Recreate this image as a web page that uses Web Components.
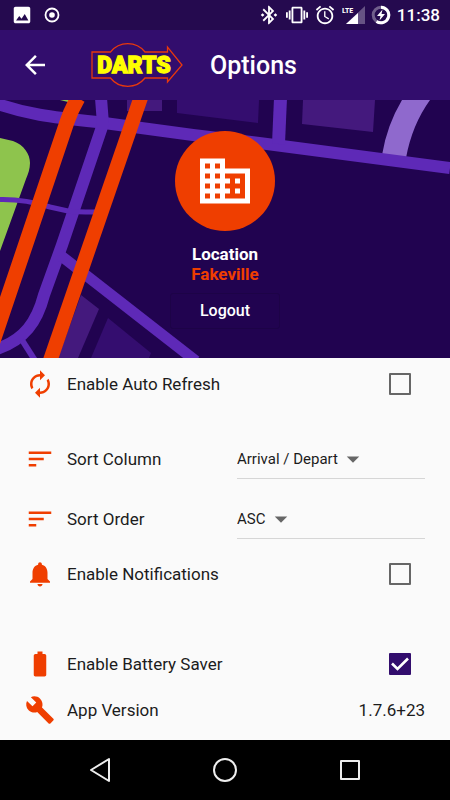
<!DOCTYPE html>
<html lang="en">
<head>
<meta charset="UTF-8">
<meta name="viewport" content="width=device-width, initial-scale=1">
<title>DARTS - Options</title>
<style>
  body {
    margin: 0;
    min-height: 100vh;
    display: flex;
    flex-direction: column;
    background: #fafafa;
    font-family: Roboto, "Liberation Sans", sans-serif;
    --primary: #320d6d;
    --primary-dark: #250a4f;
    --accent: #ef3e00;
  }
  main {
    flex: 1;
    padding: 1px 25px 0;
  }
  .spaced { margin-bottom: 20px; }
  .spaced-lg { margin-bottom: 40px; }
</style>
</head>
<body>
  <status-bar time="11:38"></status-bar>
  <app-header>Options</app-header>
  <location-hero>
    <span slot="title">Location</span>
    <span slot="name">Fakeville</span>
  </location-hero>
  <main>
    <option-toggle class="spaced" icon="autorenew" label="Enable Auto Refresh"></option-toggle>
    <option-select icon="sort" label="Sort Column" value="Arrival / Depart"></option-select>
    <option-select icon="sort" label="Sort Order" value="ASC"></option-select>
    <option-toggle class="spaced-lg" icon="bell" label="Enable Notifications"></option-toggle>
    <option-toggle icon="battery" label="Enable Battery Saver" checked></option-toggle>
    <option-info icon="build" label="App Version">1.7.6+23</option-info>
  </main>
  <nav-bar></nav-bar>

<script>
const ICONS = {
  back: 'M20 11H7.83l5.59-5.59L12 4l-8 8 8 8 1.41-1.41L7.83 13H20v-2z',
  business: 'M12 7V3H2v18h20V7H12zM6 19H4v-2h2v2zm0-4H4v-2h2v2zm0-4H4V9h2v2zm0-4H4V5h2v2zm4 12H8v-2h2v2zm0-4H8v-2h2v2zm0-4H8V9h2v2zm0-4H8V5h2v2zm10 12h-8v-2h2v-2h-2v-2h2v-2h-2V9h8v10zm-2-8h-2v2h2v-2zm0 4h-2v2h2v-2z',
  autorenew: 'M12 6v3l4-4-4-4v3c-4.42 0-8 3.58-8 8 0 1.57.46 3.03 1.24 4.26L6.7 14.8c-.45-.83-.7-1.79-.7-2.8 0-3.31 2.69-6 6-6zm6.76 1.74L17.3 9.2c.44.84.7 1.79.7 2.8 0 3.31-2.69 6-6 6v-3l-4 4 4 4v-3c4.42 0 8-3.58 8-8 0-1.57-.46-3.03-1.24-4.26z',
  sort: 'M3 18h6v-2H3v2zM3 6v2h18V6H3zm0 7h12v-2H3v2z',
  bell: 'M12 22c1.1 0 2-.9 2-2h-4c0 1.1.89 2 2 2zm6-6v-5c0-3.07-1.64-5.64-4.5-6.32V4c0-.83-.67-1.5-1.5-1.5s-1.5.67-1.5 1.5v.68C7.63 5.36 6 7.92 6 11v5l-2 2v1h16v-1l-2-2z',
  battery: 'M15.67 4H14V2h-4v2H8.33C7.6 4 7 4.6 7 5.33v15.33C7 21.4 7.6 22 8.33 22h7.33c.74 0 1.34-.6 1.34-1.33V5.33C17 4.6 16.4 4 15.67 4z',
  build: 'M22.7 19l-9.1-9.1c.9-2.3.4-5-1.5-6.9-2-2-5-2.4-7.4-1.3L9 6 6 9 1.6 4.7C.4 7.1.9 10.1 2.9 12.1c1.9 1.9 4.6 2.4 6.9 1.5l9.1 9.1c.4.4 1 .4 1.4 0l2.3-2.3c.5-.4.5-1.1.1-1.4z',
  dropdown: 'M7 10l5 5 5-5z',
  image: 'M21 19V5c0-1.1-.9-2-2-2H5c-1.1 0-2 .9-2 2v14c0 1.1.9 2 2 2h14c1.1 0 2-.9 2-2zM5.500 18l3.500-5 2.500 3 3.500-5 4 7z',
  bluetooth: 'M7 12l-2-2-2 2 2 2 2-2zM17.710 7.710L12 2h-1v7.590L6.410 5 5 6.410 10.590 12 5 17.590 6.410 19 11 14.410V22h1l5.710-5.710-4.300-4.290 4.300-4.290zM13 5.830l1.880 1.880L13 9.590V5.830zm1.880 10.460L13 18.170v-3.760l1.880 1.880zM19 10l-2 2 2 2 2-2-2-2z',
  vibration: 'M0 15h2V9H0v6zm3 2h2V7H3v10zm19-8v6h2V9h-2zm-3 8h2V7h-2v10zM16.500 3h-9C6.670 3 6 3.670 6 4.500v15c0 .83.67 1.500 1.500 1.500h9c.83 0 1.500-.67 1.500-1.500v-15c0-.83-.67-1.500-1.500-1.500zM16 19H8V5h8v14z',
  alarm: 'M22 5.720l-4.600-3.860-1.290 1.530 4.600 3.860L22 5.720zM7.880 3.390L6.600 1.860 2 5.710l1.290 1.530 4.590-3.850zM12.500 8H11v6l4.750 2.850.75-1.230-4-2.370V8zM12 4c-4.970 0-9 4.030-9 9s4.020 9 9 9c4.970 0 9-4.030 9-9s-4.030-9-9-9zm0 16c-3.870 0-7-3.130-7-7s3.130-7 7-7 7 3.130 7 7-3.130 7-7 7z'
};

class AppIcon extends HTMLElement {
  constructor() {
    super();
    this.attachShadow({ mode: 'open' });
  }

  connectedCallback() {
    this.shadowRoot.innerHTML = `
      <style>
        :host { display: block; flex: none; width: 30px; height: 30px; }
        svg { display: block; width: 100%; height: 100%; fill: currentColor; }
      </style>
      <svg viewBox="0 0 24 24" aria-hidden="true"><path fill-rule="evenodd" d="${ICONS[this.getAttribute('name')]}"/></svg>
    `;
  }
}

class StatusBar extends HTMLElement {
  constructor() {
    super();
    this.attachShadow({ mode: 'open' });
  }

  connectedCallback() {
    this.shadowRoot.innerHTML = `
      <style>
        :host {
          display: flex;
          align-items: center;
          height: 30px;
          padding: 0 10px 0 11px;
          background: var(--primary-dark);
          color: #fff;
        }
        .left, .right { display: flex; align-items: center; }
        .left { gap: 11px; }
        .right { margin-left: auto; gap: 6px; }
        svg { display: block; flex: none; }
        app-icon { width: 22px; height: 22px; }
        .lte { font: 700 8px "Liberation Sans Narrow", "Roboto Condensed", Roboto, sans-serif; }
        time { font-size: 17px; font-weight: 500; line-height: 30px; }
      </style>
      <div class="left">
        <app-icon name="image"></app-icon>
        <svg width="16" height="16" viewBox="0 0 16 16" aria-hidden="true">
          <circle cx="8" cy="8" r="6.500" fill="none" stroke="#fff" stroke-width="1.800"/>
          <circle cx="8" cy="8" r="2.800" fill="#fff"/>
        </svg>
      </div>
      <div class="right">
        <app-icon name="bluetooth"></app-icon>
        <app-icon name="vibration"></app-icon>
        <app-icon name="alarm"></app-icon>
        <svg width="23" height="20" viewBox="0 0 23 20">
          <path d="M23 1v18H4z" fill="#fff" opacity=".3"/>
          <path d="M16 8v11H4z" fill="#fff"/>
          <path d="M0 0h13v9H0z" fill="#250a4f"/>
          <text class="lte" x="0" y="8" fill="#fff">LTE</text>
        </svg>
        <svg width="20" height="20" viewBox="0 0 20 20" aria-hidden="true">
          <circle cx="10" cy="10" r="7.800" fill="none" stroke="#fff" stroke-opacity=".35" stroke-width="3"/>
          <path d="M10 2.200a7.800 7.800 0 1 1-4.500 14.200" fill="none" stroke="#fff" stroke-width="3"/>
          <path d="M11.500 4.500L6 11h3.500l-1 4.500L14 9h-3.500z" fill="#fff"/>
        </svg>
        <time>${this.getAttribute('time')}</time>
      </div>
    `;
  }
}

class AppHeader extends HTMLElement {
  constructor() {
    super();
    this.attachShadow({ mode: 'open' });
  }

  connectedCallback() {
    this.shadowRoot.innerHTML = `
      <style>
        :host {
          display: flex;
          align-items: center;
          height: 70px;
          padding: 0 20px;
          background: var(--primary);
          color: #fff;
        }
        button { padding: 0; border: 0; background: none; color: inherit; cursor: pointer; }
        .logo { display: block; flex: none; margin: 0 27px 0 41px; }
        .word { font: 900 23px Roboto, "Open Sans", sans-serif; }
        h1 { margin: 0; padding-top: 2px; font-size: 25px; font-weight: 500; line-height: 30px; }
      </style>
      <button type="button" aria-label="Back"><app-icon name="back"></app-icon></button>
      <svg class="logo" width="92" height="46" viewBox="0 0 92 46">
        <path d="M1 10H19.500A22 22 0 0 1 54 10H76.500V5L91 23 76.500 40V36H54A22 22 0 0 1 19.500 36H1z" fill="none" stroke="#e8380d" stroke-width="1.300"/>
        <text class="word" x="43" y="31" text-anchor="middle" fill="#ff0" stroke="#ff0" stroke-width="1.300">DARTS</text>
      </svg>
      <h1><slot></slot></h1>
    `;
  }
}

class LocationHero extends HTMLElement {
  constructor() {
    super();
    this.attachShadow({ mode: 'open' });
  }

  connectedCallback() {
    this.shadowRoot.innerHTML = `
      <style>
        :host { display: grid; background: #210350; color: #fff; }
        .map, .content { grid-area: 1 / 1; }
        .map { width: 100%; height: 100%; min-height: 0; contain: size; }
        .content {
          z-index: 1;
          display: flex;
          flex-direction: column;
          align-items: center;
          padding: 31px 0 29px;
          font-size: 17px;
          font-weight: 700;
          line-height: 20px;
        }
        .avatar {
          display: grid;
          place-items: center;
          width: 100px;
          height: 100px;
          margin-bottom: 13px;
          border-radius: 50%;
          background: var(--accent);
        }
        .avatar app-icon { width: 60px; height: 60px; }
        .name { color: var(--accent); }
        button {
          width: 110px;
          height: 36px;
          margin-top: 9px;
          border: 1px solid #1d0347;
          border-radius: 3px;
          background: #210350;
          color: inherit;
          font: 500 16px/20px Roboto, "Liberation Sans", sans-serif;
          cursor: pointer;
        }
      </style>
      <svg class="map" viewBox="0 0 450 258" preserveAspectRatio="xMidYMid slice" aria-hidden="true">
        <!-- city blocks -->
        <g fill="#44197d">
          <path d="M127 0H162V11H127z"/>
          <path d="M303 0L302 24 373 32 375 0z"/>
          <path d="M81 195L99 209 78 258H58z"/>
        </g>
        <g fill="#340d6f">
          <path d="M177 0V13L258 23 259 0z"/>
          <path d="M108 218L151 253 149 258H91z"/>
        </g>
        <!-- parks -->
        <path d="M0 38L13 41C24 45 30 54 30 63C30 69 28 74 26 79L0 151z" fill="#8ec44d"/>
        <path d="M60 0H72L68 2z" fill="#8ec44d"/>
        <path d="M402 0Q387 25 382 55L406 58Q412 25 430 0z" fill="#8f69cd"/>
        <!-- streets -->
        <g fill="none" stroke="#5e29b7">
          <path d="M-5 3C25 14 50 17 97 22L193 35 267 44 450 68" stroke-width="12"/>
          <path d="M101 -2L103 24 62 145 44 195C37 222 24 240 -3 249" stroke-width="12"/>
          <path d="M280.500 -2L278.500 44" stroke-width="13"/>
          <path d="M60 155L196 261" stroke-width="11"/>
          <path d="M22 240L36 262" stroke-width="6"/>
          <path d="M0 99.500Q25 99 50 107L68 111Q74 112 95 112" stroke-width="5"/>
        </g>
        <!-- rail lines -->
        <g fill="none" stroke="#ef3e00">
          <path d="M78 -2Q71 10 67 22L39 105 -14 262" stroke-width="15"/>
          <path d="M141 -3L50 261" stroke-width="14.500"/>
        </g>
      </svg>
      <div class="content">
        <div class="avatar"><app-icon name="business"></app-icon></div>
        <slot name="title"></slot>
        <div class="name"><slot name="name"></slot></div>
        <button type="button">Logout</button>
      </div>
    `;
  }
}

// Shared look of every row in the options list
const ROW_STYLE = `
  :host {
    display: flex;
    align-items: center;
    height: 50px;
    color: #1c1c1c;
    font-size: 17px;
    line-height: 24px;
  }
  .icon { margin-right: 12px; color: var(--accent); }
  .label { flex: 1; white-space: nowrap; }
`;

class OptionRow extends HTMLElement {
  constructor() {
    super();
    this.attachShadow({ mode: 'open' });
  }

  connectedCallback() {
    this.shadowRoot.innerHTML = `
      <style>${ROW_STYLE}${this.styles()}</style>
      <app-icon class="icon" name="${this.getAttribute('icon')}"></app-icon>
      ${this.content(this.getAttribute('label'))}
    `;
  }
}

class OptionToggle extends OptionRow {
  styles() {
    return `
      input {
        appearance: none;
        width: 22px;
        height: 22px;
        margin: 0 14px 0 0;
        border: 2px solid #666;
        border-radius: 1px;
        cursor: pointer;
      }
      .box { display: grid; }
      input, .tick { grid-area: 1 / 1; }
      .tick { display: none; width: 22px; height: 22px; pointer-events: none; }
      input:checked { border-color: var(--primary); background: var(--primary); }
      input:checked + .tick { display: block; }
    `;
  }

  content(label) {
    return `
      <label class="label" for="toggle">${label}</label>
      <span class="box">
        <input type="checkbox" id="toggle" ${this.hasAttribute('checked') ? 'checked' : ''}>
        <svg class="tick" viewBox="0 0 22 22" aria-hidden="true"><path d="M3 10.500L8.500 16 19 5.500" fill="none" stroke="#fff" stroke-width="2.600"/></svg>
      </span>
    `;
  }
}

class OptionSelect extends OptionRow {
  styles() {
    return `
      :host { height: 60px; }
      .field {
        display: flex;
        align-items: center;
        box-sizing: border-box;
        width: 47%;
        height: 40px;
        border-bottom: 1px solid #d6d6d6;
      }
      select {
        appearance: none;
        padding: 0;
        border: 0;
        background: none;
        color: inherit;
        font: 15px/20px Roboto, "Liberation Sans", sans-serif;
      }
      .arrow { color: #666; pointer-events: none; }
    `;
  }

  content(label) {
    return `
      <label class="label" for="select">${label}</label>
      <div class="field">
        <select id="select"><option>${this.getAttribute('value')}</option></select>
        <app-icon class="arrow" name="dropdown"></app-icon>
      </div>
    `;
  }
}

class OptionInfo extends OptionRow {
  styles() {
    return ':host { height: 42px; }';
  }

  content(label) {
    return `<span class="label">${label}</span><slot></slot>`;
  }
}

class NavBar extends HTMLElement {
  constructor() {
    super();
    this.attachShadow({ mode: 'open' });
  }

  connectedCallback() {
    this.shadowRoot.innerHTML = `
      <style>
        :host {
          display: grid;
          grid-template-columns: repeat(3, 1fr);
          place-items: center;
          height: 60px;
          padding: 0 38px;
          background: #000;
        }
        button { padding: 0; border: 0; background: none; cursor: pointer; }
        svg { display: block; fill: none; stroke: #eee; stroke-width: 2; stroke-linejoin: round; }
      </style>
      <button type="button" aria-label="Back"><svg width="30" height="30"><path d="M24 4V26L6 15z"/></svg></button>
      <button type="button" aria-label="Home"><svg width="30" height="30"><circle cx="15" cy="15" r="11"/></svg></button>
      <button type="button" aria-label="Recent apps"><svg width="30" height="30"><path d="M6 6H24V24H6z"/></svg></button>
    `;
  }
}

customElements.define('app-icon', AppIcon);
customElements.define('status-bar', StatusBar);
customElements.define('app-header', AppHeader);
customElements.define('location-hero', LocationHero);
customElements.define('option-toggle', OptionToggle);
customElements.define('option-select', OptionSelect);
customElements.define('option-info', OptionInfo);
customElements.define('nav-bar', NavBar);
</script>
</body>
</html>
